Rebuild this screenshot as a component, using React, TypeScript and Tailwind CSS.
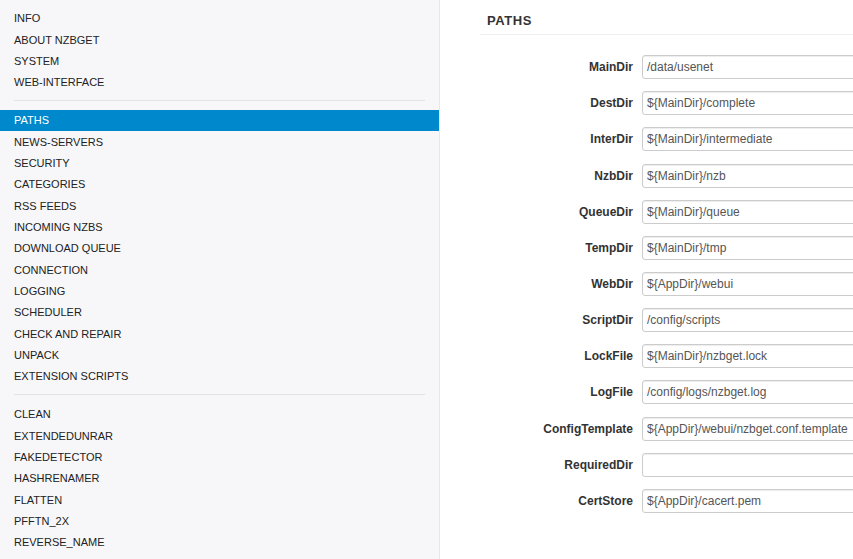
const groups: string[][] = [
  ["INFO", "ABOUT NZBGET", "SYSTEM", "WEB-INTERFACE"],
  [
    "PATHS",
    "NEWS-SERVERS",
    "SECURITY",
    "CATEGORIES",
    "RSS FEEDS",
    "INCOMING NZBS",
    "DOWNLOAD QUEUE",
    "CONNECTION",
    "LOGGING",
    "SCHEDULER",
    "CHECK AND REPAIR",
    "UNPACK",
    "EXTENSION SCRIPTS",
  ],
  ["CLEAN", "EXTENDEDUNRAR", "FAKEDETECTOR", "HASHRENAMER", "FLATTEN", "PFFTN_2X", "REVERSE_NAME"],
]

const options: [string, string][] = [
  ["MainDir", "/data/usenet"],
  ["DestDir", "${MainDir}/complete"],
  ["InterDir", "${MainDir}/intermediate"],
  ["NzbDir", "${MainDir}/nzb"],
  ["QueueDir", "${MainDir}/queue"],
  ["TempDir", "${MainDir}/tmp"],
  ["WebDir", "${AppDir}/webui"],
  ["ScriptDir", "/config/scripts"],
  ["LockFile", "${MainDir}/nzbget.lock"],
  ["LogFile", "/config/logs/nzbget.log"],
  ["ConfigTemplate", "${AppDir}/webui/nzbget.conf.template"],
  ["RequiredDir", ""],
  ["CertStore", "${AppDir}/cacert.pem"],
]

export default function App() {
  return (
    <div className="flex h-screen w-full overflow-hidden bg-white font-['Liberation_Sans',Arial,sans-serif]">
      <aside className="w-[440px] shrink-0 bg-[#f7f7f9] border-r border-[#e8e8ea] pt-[8px]">
        {groups.map((g, gi) => (
          <div key={gi}>
            {gi > 0 && <div className="mx-[14px] mt-[7px] mb-[8.5px] h-px bg-[#e3e3e6]" />}
            {g.map(item => (
              <div
                key={item}
                className={
                  "h-[21.35px] flex items-center px-[14px] text-[11px] " +
                  (item === "PATHS" ? "bg-[#0088cc] text-white" : "text-[#222]")
                }
              >
                {item}
              </div>
            ))}
          </div>
        ))}
      </aside>
      <main className="flex-1 pl-[40px]">
        <div className="mt-[11px] border-b border-[#eeeeee] pl-[7px] pb-[3px]">
          <h2 className="text-[13px] font-bold tracking-[0.6px] text-[#333] leading-[20px]">PATHS</h2>
        </div>
        <div className="mt-[20px] flex flex-col gap-[12px]">
          {options.map(([name, value]) => (
            <div key={name} className="flex items-center h-[24.17px]">
              <label className="w-[162px] shrink-0 text-right text-[12px] font-bold text-[#333] pr-[9px]">{name}</label>
              <input
                readOnly
                value={value}
                className="w-[430px] shrink-0 h-[24px] border border-[#cccccc] rounded-[3px] px-[4px] text-[12px] text-[#555] bg-white shadow-[inset_0_1px_1px_rgba(0,0,0,0.075)] outline-none"
              />
            </div>
          ))}
        </div>
      </main>
    </div>
  )
}
